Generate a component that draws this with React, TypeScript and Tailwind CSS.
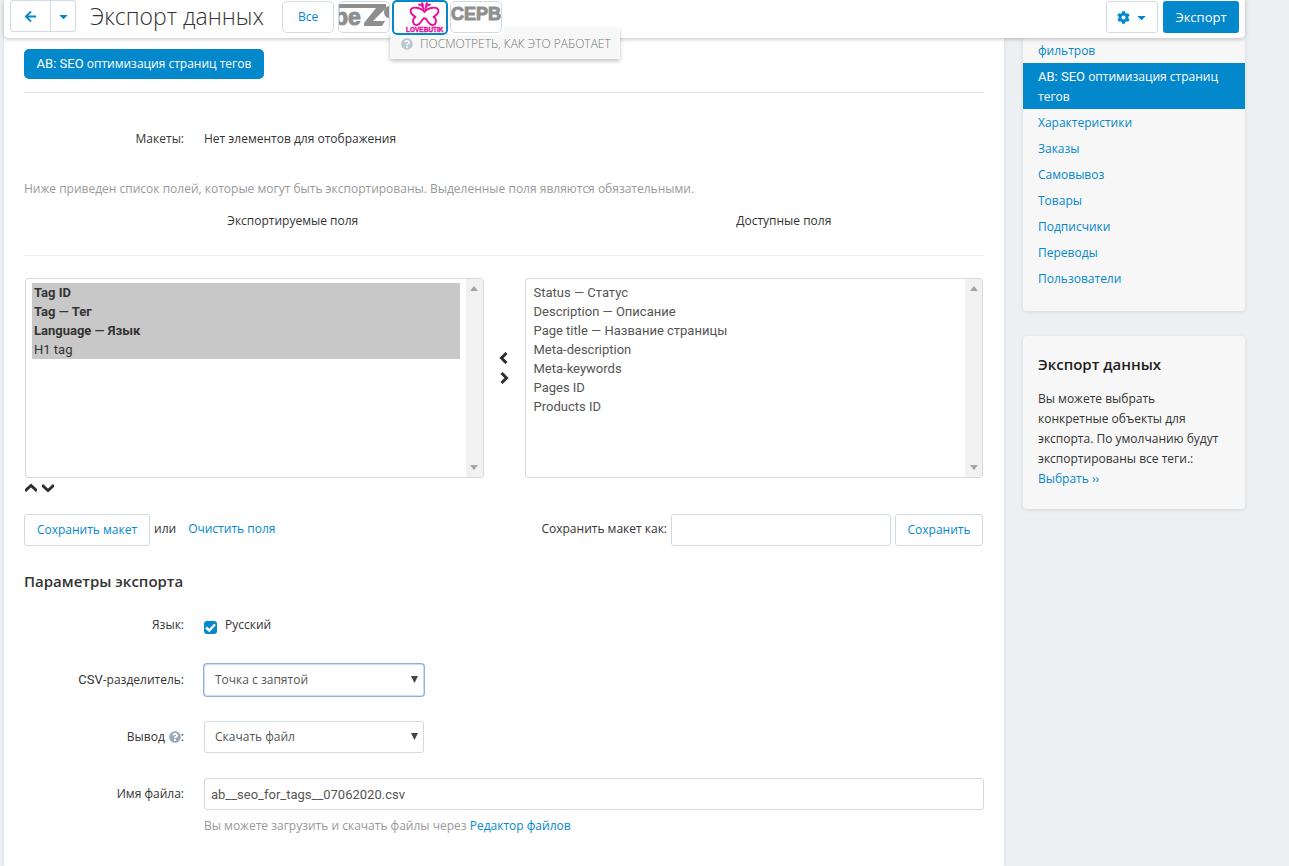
import React from "react";
import clsx from "clsx";
import { FaArrowLeft, FaCaretDown, FaCog, FaQuestionCircle } from "react-icons/fa";

const exportedFields = [
  { label: "Tag ID", required: true },
  { label: "Tag — Тег", required: true },
  { label: "Language — Язык", required: true },
  { label: "H1 tag", required: false },
];

const availableFields = [
  { label: "Status — Статус" },
  { label: "Description — Описание" },
  { label: "Page title — Название страницы" },
  { label: "Meta-description" },
  { label: "Meta-keywords" },
  { label: "Pages ID" },
  { label: "Products ID" },
];

const sections = [
  "Характеристики",
  "Заказы",
  "Самовывоз",
  "Товары",
  "Подписчики",
  "Переводы",
  "Пользователи",
];

const button =
  "flex h-8 items-center justify-center rounded-[3px] border border-[#d1dbe3] bg-white text-[#0388cc]";
const control =
  "h-8 rounded-[3px] border border-[#d1dbe3] bg-white text-[#555] outline-none";

// Latin text is set in Roboto, everything else inherits the page font
const Latin: React.FC<{ children: React.ReactNode }> = ({ children }) => (
  <span className="font-[Roboto,sans-serif] text-[13px] leading-none">{children}</span>
);

const Chevron: React.FC<{ points: string }> = ({ points }) => (
  <svg className="size-3" viewBox="0 0 12 12" fill="none" stroke="#2f2f2f" strokeWidth="3">
    <polyline points={points} />
  </svg>
);

const ScrollTrack = () => (
  <div className="flex w-[17px] flex-none flex-col items-center justify-between bg-[#f1f1f1] py-[7px]">
    <svg width="8" height="5" viewBox="0 0 8 5" fill="#a3a3a3">
      <path d="M4 0 8 5H0z" />
    </svg>
    <svg width="8" height="5" viewBox="0 0 8 5" fill="#a3a3a3">
      <path d="M0 0h8L4 5z" />
    </svg>
  </div>
);

type Field = { label: string; required?: boolean };

const FieldList: React.FC<{ label: string; fields: Field[]; selected?: boolean }> = ({
  label,
  fields,
  selected,
}) => (
  <div className="flex h-[200px] min-w-0 flex-1 overflow-hidden rounded-[3px] border border-[#d1dbe3] bg-white">
    <select
      multiple
      aria-label={label}
      defaultValue={selected ? fields.map((field) => field.label) : []}
      className="min-w-0 flex-1 overflow-hidden px-[6px] py-1 font-[Roboto,'Open_Sans',sans-serif] text-[13px] text-[#555] outline-none [scrollbar-width:none]"
    >
      {fields.map((field) => (
        <option
          key={field.label}
          value={field.label}
          className={clsx(
            "h-[19px] px-[2px] pt-[2px] pb-0 checked:bg-[#c8c8c8] checked:text-[#333]",
            field.required && "font-bold"
          )}
        >
          {field.label}
        </option>
      ))}
    </select>
    <ScrollTrack />
  </div>
);

const Dropdown: React.FC<{ id: string; value: string; focused?: boolean }> = ({
  id,
  value,
  focused,
}) => (
  <div className="relative w-[220px]">
    <select
      id={id}
      className={clsx(
        control,
        "block w-full appearance-none px-[10px]",
        focused && "border-[#8db2f3] ring-1 ring-[#8db2f3]"
      )}
    >
      <option>{value}</option>
    </select>
    <svg
      className="pointer-events-none absolute top-3 right-[6px]"
      width="7"
      height="7"
      viewBox="0 0 7 7"
      fill="#444"
    >
      <path d="M0 0h7L3.500 7z" />
    </svg>
  </div>
);

const Row: React.FC<{
  label: React.ReactNode;
  htmlFor?: string;
  className?: string;
  children: React.ReactNode;
}> = ({ label, htmlFor, className, children }) => (
  <div className={clsx("flex gap-5", className)}>
    <label htmlFor={htmlFor} className="flex w-40 flex-none justify-end pt-[6px]">
      {label}
    </label>
    <div className="min-w-0 flex-1">{children}</div>
  </div>
);

const Header = () => (
  <header className="relative z-10 flex h-[38px] items-start rounded-b-[4px] bg-white px-[6px] shadow-[0_1px_4px_rgba(0,0,0,0.25)]">
    <div className="flex">
      <button aria-label="Назад" className={clsx(button, "w-[41px] rounded-r-none")}>
        <FaArrowLeft className="size-[13px]" />
      </button>
      <button aria-label="История" className={clsx(button, "-ml-px w-[26px] rounded-l-none")}>
        <FaCaretDown className="size-[13px]" />
      </button>
    </div>
    <h1 className="ml-[14px] w-[178px] text-[23px] leading-8 font-[350] whitespace-nowrap text-[#333]">
      Экспорт данных
    </h1>
    <div className="relative ml-[14px]">
      <div className="absolute top-7 left-[108px] flex h-[31px] w-[230px] items-center gap-[7px] bg-[#f7f7f7] pl-[11px] font-light whitespace-nowrap text-[#777] shadow-[0_2px_4px_rgba(0,0,0,0.25)]">
        <FaQuestionCircle className="size-3 text-[#bcc8d3]" />
        ПОСМОТРЕТЬ, КАК ЭТО РАБОТАЕТ
      </div>
      <div className="relative flex items-start rounded-br-[4px] bg-white pr-[2px]">
        <button className={clsx(button, "mt-px mr-1 w-[52px] rounded-[5px]")}>Все</button>
        <button
          aria-label="BeZ"
          className={clsx(button, "mt-px mr-[2px] w-[52px] overflow-hidden rounded-[5px]")}
        >
          <svg className="flex-none" width="52" height="32" viewBox="0 0 52 32" fill="#8f8f8f">
            <path d="M0 3h48v4L35 20h12l-3 5H26v-3L38 7H0z" />
            <path d="M52 5c-7 0-8 10-2 12h2z" />
            <text x="-4" y="24" fontFamily="Liberation Sans" fontWeight="bold" fontSize="23" stroke="#8f8f8f">
              be
            </text>
          </svg>
        </button>
        <button
          aria-label="Lovebutik"
          className="mr-[2px] flex h-[35px] w-14 items-center justify-center rounded-[5px] border-2 border-[#0388cc] bg-white"
        >
          <svg className="flex-none" width="52" height="31" viewBox="0 0 52 31">
            <g fill="none" stroke="#ec0a9b" strokeWidth="1.800" strokeLinecap="round" strokeLinejoin="round">
              <path d="M30.500 10C27 5 17 4 16.500 9c0 3.500 3 4.500 5 6-4 2-3 8.500 1.500 8 3-.5 4.500-4.500 6.500-6.500h2c2 2 3.500 6 6.500 6.500 4.500.5 5.500-6 1.500-8 2-1.500 5-2.500 5-6-.5-5-10.500-4-14 1z" />
              <path d="M29.500 7c0-3-2-4-4.500-4.500M31.500 7c0-3 2-4 4.500-4.500M29 3l-1-2M32 3l1-2" />
            </g>
            <text x="12" y="30" fontFamily="Liberation Sans" fontWeight="bold" fontSize="6.500" fill="#ec0a9b" stroke="#ec0a9b" strokeWidth="0.400">
              LOVEBUTIK
            </text>
          </svg>
        </button>
        <button
          aria-label="Сервис"
          className={clsx(button, "mt-px w-[52px] overflow-hidden rounded-[5px]")}
        >
          <svg className="flex-none" width="52" height="32" viewBox="0 0 52 32">
            <text x="1" y="19" fontFamily="Liberation Sans" fontWeight="bold" fontSize="18" fill="#8f8f8f" stroke="#8f8f8f">
              СЕРВ
            </text>
          </svg>
        </button>
      </div>
    </div>
    <div className="mt-px ml-auto flex gap-[5px]">
      <button aria-label="Настройки" className={clsx(button, "w-[52px] gap-[5px]")}>
        <FaCog className="size-[13px]" />
        <FaCaretDown className="size-[13px]" />
      </button>
      <button className="h-8 w-[76px] rounded-[3px] bg-[#0388cc] text-[13px] text-white">
        Экспорт
      </button>
    </div>
  </header>
);

const Sidebar = () => (
  <aside className="w-[222px] flex-none">
    <nav className="rounded-b-[4px] bg-[#f7f7f7] pb-5 text-[#0388cc] shadow-[0_1px_4px_rgba(0,0,0,0.1)]">
      <a href="#filters" className="block px-[15px] pt-[3px] pb-[2px]">
        фильтров
      </a>
      <a href="#tags" className="block bg-[#0388cc] px-[15px] pt-1 pb-[2px] text-white">
        <Latin>AB: SEO</Latin> оптимизация страниц тегов
      </a>
      {sections.map((section) => (
        <a key={section} href="#section" className="block px-[15px] pt-1 pb-[2px]">
          {section}
        </a>
      ))}
    </nav>
    <section className="mt-[25px] rounded-[4px] bg-[#f7f7f7] px-[15px] pt-[18px] pb-5 shadow-[0_1px_4px_rgba(0,0,0,0.1)]">
      <h2 className="text-[15px] font-semibold text-[#222]">Экспорт данных</h2>
      <p className="mt-[15px] pr-1">
        Вы можете выбрать конкретные объекты для экспорта. По умолчанию будут экспортированы все
        теги.:
      </p>
      <a href="#choose" className="text-[#0388cc]">
        Выбрать ››
      </a>
    </section>
  </aside>
);

const App = () => (
  <div className="min-h-screen bg-[#ecf0f3] pr-11 pl-1 font-['Open_Sans',sans-serif] text-[12px] leading-5 text-[#333]">
    <Header />
    <div className="flex gap-[19px]">
      <main className="min-h-[828px] min-w-0 flex-1 bg-white px-5 pt-[11px] pb-[30px] shadow-[0_1px_4px_rgba(0,0,0,0.1)]">
        <button className="h-[30px] w-[240px] rounded-[5px] bg-[#0388cc] whitespace-nowrap text-white">
          <Latin>AB: SEO</Latin> оптимизация страниц тегов
        </button>
        <hr className="mt-[13px] border-[#dde5eb]" />

        <div className="mt-9 flex gap-5">
          <span className="w-40 text-right">Макеты:</span>
          <span>Нет элементов для отображения</span>
        </div>
        <p className="mt-[30px] text-[#999]">
          Ниже приведен список полей, которые могут быть экспортированы. Выделенные поля являются
          обязательными.
        </p>

        <div className="mt-3 flex text-center">
          <h2 className="w-[56%]">Экспортируемые поля</h2>
          <h2 className="flex-1 pl-[22px]">Доступные поля</h2>
        </div>
        <hr className="mt-6 border-[#ececec]" />

        <div className="mt-[22px] flex px-px">
          <FieldList label="Экспортируемые поля" fields={exportedFields} selected />
          <div className="flex w-[41px] flex-col items-center justify-center gap-2 pb-5">
            <button aria-label="Добавить">
              <Chevron points="8.500,1 3.500,6 8.500,11" />
            </button>
            <button aria-label="Убрать">
              <Chevron points="3.500,1 8.500,6 3.500,11" />
            </button>
          </div>
          <FieldList label="Доступные поля" fields={availableFields} />
        </div>
        <div className="mt-1 flex gap-[5px] px-px">
          <button aria-label="Выше">
            <Chevron points="0,9 6,3.500 12,9" />
          </button>
          <button aria-label="Ниже">
            <Chevron points="0,3 6,8.500 12,3" />
          </button>
        </div>

        <div className="mt-5 flex gap-1 pr-px whitespace-nowrap">
          <button className={clsx(button, "w-[126px]")}>Сохранить макет</button>
          <span className="pt-[5px]">или</span>
          <a href="#clear" className="ml-2 pt-[5px] text-[#0388cc]">
            Очистить поля
          </a>
          <label htmlFor="layout-name" className="ml-auto pt-[5px]">
            Сохранить макет как:
          </label>
          <input id="layout-name" className={clsx(control, "w-[220px] px-[6px]")} />
          <button className={clsx(button, "w-[88px]")}>Сохранить</button>
        </div>

        <h2 className="mt-[25px] text-[15px] font-semibold">Параметры экспорта</h2>
        <Row label="Язык:" className="mt-[18px]">
          <label className="flex gap-2 pt-[6px]">
            <span className="relative mt-[6px] size-[13px]">
              <input
                type="checkbox"
                defaultChecked
                className="block size-[13px] appearance-none rounded-[3px] bg-[#0388cc]"
              />
              <svg
                className="pointer-events-none absolute inset-0"
                viewBox="0 0 13 13"
                fill="none"
                stroke="#fff"
                strokeWidth="2.500"
              >
                <path d="M2 6.500 5.200 9.500 11 3.500" />
              </svg>
            </span>
            Русский
          </label>
        </Row>
        <Row
          htmlFor="delimiter"
          className="mt-[29px]"
          label={
            <span>
              <Latin>CSV</Latin>-разделитель:
            </span>
          }
        >
          <Dropdown id="delimiter" value="Точка с запятой" focused />
        </Row>
        <Row
          htmlFor="output"
          className="mt-[25px]"
          label={
            <span className="flex h-5 items-center">
              Вывод <FaQuestionCircle className="ml-1 size-3 text-[#98a9b8]" />:
            </span>
          }
        >
          <Dropdown id="output" value="Скачать файл" />
        </Row>
        <Row htmlFor="filename" className="mt-[25px]" label="Имя файла:">
          <input
            id="filename"
            defaultValue="ab__seo_for_tags__07062020.csv"
            className={clsx(control, "block w-full px-[6px] font-[Roboto,sans-serif] text-[13px]")}
          />
          <p className="mt-[6px] text-[#999]">
            Вы можете загрузить и скачать файлы через{" "}
            <a href="#files" className="text-[#0388cc]">
              Редактор файлов
            </a>
          </p>
        </Row>
      </main>
      <Sidebar />
    </div>
  </div>
);

export default App;
